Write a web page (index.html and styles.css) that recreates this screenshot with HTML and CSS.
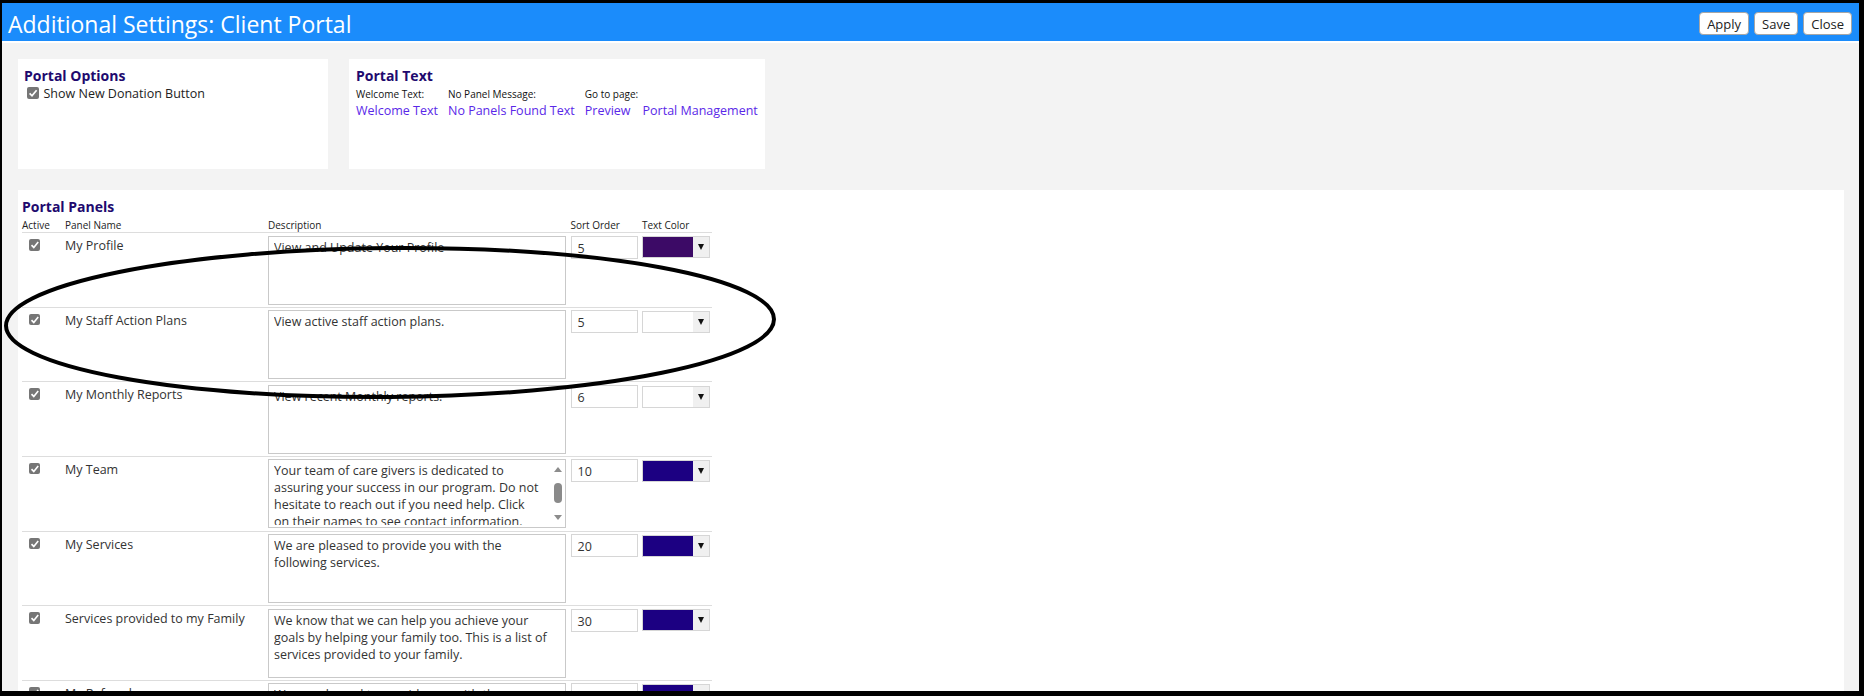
FILE: index.html
```html
<!DOCTYPE html>
<html lang="en">
<head>
<meta charset="utf-8">
<title>Additional Settings: Client Portal</title>
<link rel="stylesheet" href="styles.css">
</head>
<body>
<div class="window">
  <header class="titlebar">
    <h1 class="title">Additional Settings: Client Portal</h1>
    <div class="actions">
      <button class="btn" type="button">Apply</button>
      <button class="btn" type="button">Save</button>
      <button class="btn" type="button">Close</button>
    </div>
  </header>

  <main class="content">
    <div class="top">
      <section class="card options">
        <h2 class="card-title">Portal Options</h2>
        <label class="check-line"><span class="chk chk-lg"><svg viewBox="0 0 12 12"><path d="M2.6 6.4 L5 8.8 L9.6 3.2" /></svg></span>Show New Donation Button</label>
      </section>

      <section class="card ptext">
        <h2 class="card-title">Portal Text</h2>
        <div class="link-cols">
          <div class="link-col">
            <span class="small-label">Welcome Text:</span>
            <a class="link" href="#">Welcome Text</a>
          </div>
          <div class="link-col">
            <span class="small-label">No Panel Message:</span>
            <a class="link" href="#">No Panels Found Text</a>
          </div>
          <div class="link-col">
            <span class="small-label">Go to page:</span>
            <div class="link-pair">
              <a class="link" href="#">Preview</a>
              <a class="link" href="#">Portal Management</a>
            </div>
          </div>
        </div>
      </section>
    </div>

    <section class="card panels">
      <h2 class="card-title">Portal Panels</h2>
      <div class="head">
        <span>Active</span><span>Panel Name</span><span>Description</span><span>Sort Order</span><span>Text Color</span>
      </div>

      <div class="row">
        <span class="chk"><svg viewBox="0 0 12 12"><path d="M2.6 6.4 L5 8.8 L9.6 3.2" /></svg></span>
        <span class="name">My Profile</span>
        <div class="desc"><div class="desc-text">View and Update Your Profile</div></div>
        <div class="sort">5</div>
        <div class="color"><span class="swatch" style="background:#3c0a66"></span><span class="arrow"></span></div>
      </div>

      <div class="row">
        <span class="chk"><svg viewBox="0 0 12 12"><path d="M2.6 6.4 L5 8.8 L9.6 3.2" /></svg></span>
        <span class="name">My Staff Action Plans</span>
        <div class="desc"><div class="desc-text">View active staff action plans.</div></div>
        <div class="sort">5</div>
        <div class="color"><span class="swatch"></span><span class="arrow"></span></div>
      </div>

      <div class="row">
        <span class="chk"><svg viewBox="0 0 12 12"><path d="M2.6 6.4 L5 8.8 L9.6 3.2" /></svg></span>
        <span class="name">My Monthly Reports</span>
        <div class="desc"><div class="desc-text">View recent Monthly reports.</div></div>
        <div class="sort">6</div>
        <div class="color"><span class="swatch"></span><span class="arrow"></span></div>
      </div>

      <div class="row">
        <span class="chk"><svg viewBox="0 0 12 12"><path d="M2.6 6.4 L5 8.8 L9.6 3.2" /></svg></span>
        <span class="name">My Team</span>
        <div class="desc desc-scroll">
          <div class="desc-text">Your team of care givers is dedicated to<br>assuring your success in our program. Do not<br>hesitate to reach out if you need help. Click<br>on their names to see contact information.</div>
          <div class="sb"><span class="sb-up"></span><span class="sb-track"><span class="sb-thumb"></span></span><span class="sb-down"></span></div>
        </div>
        <div class="sort">10</div>
        <div class="color"><span class="swatch" style="background:#1c0082"></span><span class="arrow"></span></div>
      </div>

      <div class="row">
        <span class="chk"><svg viewBox="0 0 12 12"><path d="M2.6 6.4 L5 8.8 L9.6 3.2" /></svg></span>
        <span class="name">My Services</span>
        <div class="desc"><div class="desc-text">We are pleased to provide you with the<br>following services.</div></div>
        <div class="sort">20</div>
        <div class="color"><span class="swatch" style="background:#1c0082"></span><span class="arrow"></span></div>
      </div>

      <div class="row">
        <span class="chk"><svg viewBox="0 0 12 12"><path d="M2.6 6.4 L5 8.8 L9.6 3.2" /></svg></span>
        <span class="name">Services provided to my Family</span>
        <div class="desc"><div class="desc-text">We know that we can help you achieve your<br>goals by helping your family too. This is a list of<br>services provided to your family.</div></div>
        <div class="sort">30</div>
        <div class="color"><span class="swatch" style="background:#1c0082"></span><span class="arrow"></span></div>
      </div>

      <div class="row">
        <span class="chk"><svg viewBox="0 0 12 12"><path d="M2.6 6.4 L5 8.8 L9.6 3.2" /></svg></span>
        <span class="name">My Referrals</span>
        <div class="desc"><div class="desc-text">We are pleased to provide you with the<br>following referrals.</div></div>
        <div class="sort">40</div>
        <div class="color"><span class="swatch" style="background:#1c0082"></span><span class="arrow"></span></div>
      </div>
    </section>
  </main>

  <!-- hand-drawn highlight ring around the staff action plans row -->
  <svg class="ring" viewBox="0 0 1857 688" aria-hidden="true">
    <ellipse cx="388" cy="319.5" rx="384" ry="74.5" transform="rotate(-0.5 388 319.5)" />
  </svg>
</div>
</body>
</html>
```

FILE: styles.css
```css
html,
body {
  margin: 0;
  height: 100%;
}

body {
  background: #000;
  overflow: hidden;
  font-family: "Open Sans", "Noto Sans", sans-serif;
  color: #333;
}

.window {
  position: relative;
  margin: 3px 5px 5px 2px;
  height: 688px;
  background: #f3f3f3;
  overflow: hidden;
  display: flex;
  flex-direction: column;
}

/* ---- title bar ---- */
.titlebar {
  flex: none;
  height: 38px;
  background: #1b8cfb;
  border-bottom: 2px solid #fff;
  display: flex;
  justify-content: space-between;
  align-items: flex-start;
  padding: 0 7px 0 6px;
}

.title {
  margin: 0;
  padding-top: 5.5px;
  font-size: 23px;
  font-weight: 400;
  line-height: 31px;
  color: #fff;
}

.actions {
  display: flex;
  gap: 5px;
  padding-top: 9px;
}

.btn {
  height: 23px;
  padding: 0 7px;
  border: 1px solid #a6a6a6;
  border-radius: 4px;
  background: #fff;
  font-family: "Open Sans", "Noto Sans", sans-serif;
  font-size: 13px;
  line-height: 20px;
  color: #222;
}

/* ---- content ---- */
.content {
  flex: 1;
  min-height: 0;
  display: flex;
  flex-direction: column;
  gap: 21px;
  padding: 16px 15px 0 16px;
}

.top {
  display: flex;
  gap: 21px;
}

.card {
  background: #fff;
  box-sizing: border-box;
}

.card-title {
  margin: 0;
  font-size: 14px;
  font-weight: 700;
  line-height: 19px;
  color: #21096e;
}

.options {
  width: 310px;
  height: 110px;
  padding: 6.5px 6px 0;
}

.check-line {
  display: flex;
  align-items: center;
  gap: 5px;
  font-size: 12.5px;
  line-height: 17px;
  color: #222;
  padding-left: 2.5px;
}

.ptext {
  width: 416px;
  height: 110px;
  padding: 6.5px 7px 0;
}

.link-cols {
  display: flex;
  gap: 10px;
  margin-top: 2px;
}

.link-col {
  display: flex;
  flex-direction: column;
}

.small-label {
  font-size: 10px;
  line-height: 14px;
  color: #111;
}

.link-pair {
  display: flex;
  gap: 12px;
}

.link {
  font-size: 12.5px;
  line-height: 17px;
  color: #5a28e8;
  text-decoration: none;
  margin-top: 1px;
}

/* ---- checkbox glyph ---- */
.chk {
  width: 11.5px;
  height: 11.5px;
  border-radius: 2px;
  background: #767676;
  display: inline-flex;
}

.chk-lg {
  width: 12px;
  height: 12px;
}

.chk svg {
  width: 100%;
  height: 100%;
  fill: none;
  stroke: #fff;
  stroke-width: 1.7;
}

/* ---- panels table ---- */
.panels {
  flex: 1;
  padding: 6.5px 0 0 4px;
}

.head,
.row {
  display: grid;
  grid-template-columns: 43px 203px 302.5px 71.5px 70px;
  width: 690px;
}

.head {
  height: 14.5px;
  margin-top: 2px;
  font-size: 10px;
  line-height: 14px;
  color: #222;
}

.row {
  height: 74.67px;
  box-sizing: border-box;
  border-top: 1px solid #dddddd;
  padding-top: 2.5px;
  align-items: start;
}

.row .chk {
  margin: 3.5px 0 0 6.5px;
}

.name {
  padding-top: 1.5px;
  font-size: 12.5px;
  line-height: 17px;
  color: #333;
}

.desc {
  width: 298px;
  height: 69px;
  box-sizing: border-box;
  border: 1px solid #c9c9c9;
  padding: 2px 5px;
  display: flex;
  overflow: hidden;
}

.desc-text {
  flex: 1;
  min-width: 0;
  overflow: hidden;
  white-space: nowrap;
  font-size: 12.5px;
  line-height: 17px;
  color: #333;
}

.desc-scroll {
  padding-right: 1px;
}

/* scrollbar of an overflowing description */
.sb {
  flex: none;
  width: 13px;
  display: flex;
  flex-direction: column;
  align-items: center;
  margin: -1px 0;
}

.sb-up,
.sb-down {
  flex: none;
  height: 17px;
  display: flex;
  align-items: center;
  justify-content: center;
}

.sb-up::before {
  content: "";
  border-left: 4px solid transparent;
  border-right: 4px solid transparent;
  border-bottom: 5px solid #8c8c8c;
}

.sb-down::before {
  content: "";
  border-left: 4px solid transparent;
  border-right: 4px solid transparent;
  border-top: 5px solid #8c8c8c;
}

.sb-track {
  flex: 1;
  padding-top: 5px;
}

.sb-thumb {
  display: block;
  width: 8px;
  height: 20px;
  border-radius: 4px;
  background: #8a8a8a;
}

.sort {
  width: 67px;
  height: 23px;
  box-sizing: border-box;
  border: 1px solid #d6d6d6;
  padding: 3px 0 0 6px;
  font-size: 12.5px;
  line-height: 17px;
  color: #333;
}

.color {
  width: 68px;
  height: 22px;
  margin-top: 0.7px;
  box-sizing: border-box;
  border: 1px solid #d6d6d6;
  display: flex;
}

.swatch {
  flex: 1;
  background: #fff;
}

.arrow {
  flex: none;
  width: 16px;
  background: #f0f0f0;
  display: flex;
  align-items: center;
  justify-content: center;
}

.arrow::before {
  content: "";
  border-left: 3.5px solid transparent;
  border-right: 3.5px solid transparent;
  border-top: 6px solid #111;
}

/* ---- highlight ring ---- */
.ring {
  position: absolute;
  left: 0;
  top: 0;
  width: 1857px;
  height: 688px;
  pointer-events: none;
}

.ring ellipse {
  fill: none;
  stroke: #000;
  stroke-width: 4;
}
```
